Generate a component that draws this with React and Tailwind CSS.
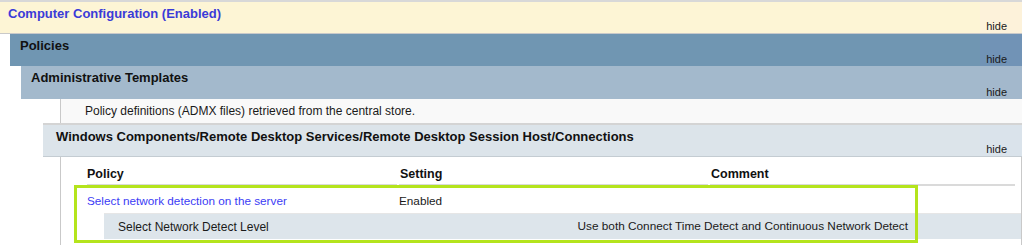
const font = { fontFamily: '"Liberation Sans", Arial, sans-serif' };

const HideCell = ({ tint }) => (
  <div className={`flex w-[42px] shrink-0 items-end justify-end pr-[15px] pb-[1px] text-[11px] leading-none text-[#1a1a1a] ${tint}`}>
    hide
  </div>
);

const SectionRow = ({ title, bg, tint, indent, pad = 'pl-[10px]', titleClass = 'text-[#111]', border = '' }) => (
  <div className={`flex h-[32px] ${indent} ${border}`}>
    <div className={`flex flex-1 ${bg}`}>
      <div className={`flex-1 pt-[5px] text-[13px] font-bold leading-[14px] ${pad} ${titleClass}`}>{title}</div>
      <HideCell tint={tint} />
    </div>
  </div>
);

export default function App() {
  return (
    <div style={font} className="h-[245px] w-[1024px] overflow-hidden bg-white pr-[2px]">
      <div className="h-[2px] bg-[#d8d8d8]" />

      <SectionRow
        title="Computer Configuration (Enabled)"
        bg="bg-[#fdf5d5]"
        tint="bg-[#fdf2da]"
        indent="ml-0 h-[31px]"
        pad="pl-[8px]"
        titleClass="text-[#3b3bd8] text-[12.5px]"
        border="border-b border-[#c9c9c9]"
      />
      <SectionRow title="Policies" bg="bg-[#7096b2]" tint="bg-[#7193b6]" indent="ml-[10px]" />
      <SectionRow title="Administrative Templates" bg="bg-[#a3b9cc]" tint="bg-[#a3b8cc]" indent="ml-[21px] h-[33px]" pad="pl-[10px] text-[12.75px]" />

      <div className="ml-[60px] flex h-[24px] items-center border-l border-[#c9c9c9] bg-[#f9f9f9] pl-[24px] text-[12px] text-[#1a1a1a]">
        Policy definitions (ADMX files) retrieved from the central store.
      </div>
      <div className="ml-[43px] h-[2px] bg-[#d4d4d4]" />

      <SectionRow
        title="Windows Components/Remote Desktop Services/Remote Desktop Session Host/Connections"
        bg="bg-[#dce4ea]"
        tint="bg-[#dae3eb]"
        indent="ml-[43px] border-b border-[#c4ccd2]"
        pad="pl-[13px] text-[13.1px]"
      />

      <div className="relative ml-[60px] h-[90px] border-l border-r border-[#c9c9c9] pt-[8px]">
        <div className="ml-[26px] mr-[6px] grid h-[20px] grid-cols-[310px_309px_1fr] gap-x-[2px] text-[12.5px] font-bold text-[#111]">
          <div className="border-b-2 border-[#dadada]">Policy</div>
          <div className="border-b-2 border-[#dadada] pl-px">Setting</div>
          <div className="border-b-2 border-[#dadada] pl-px">Comment</div>
        </div>

        <div className="mt-[4px] ml-[26px] grid h-[24px] grid-cols-[312px_1fr] items-center text-[11.75px]">
          <div className="text-[#3b3bf5]">Select network detection on the server</div>
          <div className="text-[#1a1a1a]">Enabled</div>
        </div>

        <div className="ml-[43px] flex h-[26px] items-center justify-between border-t border-[#e6e6e6] bg-[#dde5eb] pl-[14px] pr-[113px] text-[12px] text-[#1a1a1a]">
          <span>Select Network Detect Level</span>
          <span className="text-[11.8px]">Use both Connect Time Detect and Continuous Network Detect</span>
        </div>

        {/* highlight frame around the selected policy */}
        <div className="pointer-events-none absolute left-[13px] top-[28px] h-[58px] w-[844px] border-[3px] border-[#b4e41c]" />
      </div>
    </div>
  );
}
